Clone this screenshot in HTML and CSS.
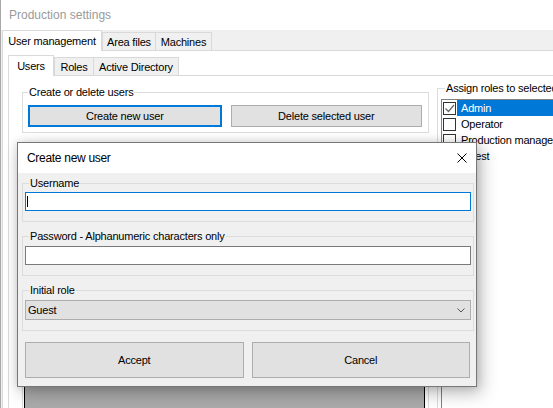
FILE: index.html
```html
<!DOCTYPE html>
<html lang="en">
<head>
<meta charset="utf-8">
<title>Production settings</title>
<link rel="stylesheet" href="styles.css">
</head>
<body>
<div class="app">
  <div class="titlebar">Production settings</div>
  <div class="form">
    <div class="tabstrip outer-tabs">
      <div class="tab sel w-um">User management</div>
      <div class="tab w-af">Area files</div>
      <div class="tab w-ma overlap">Machines</div>
    </div>
    <div class="page outer-page">
      <div class="tabstrip inner-tabs">
        <div class="tab sel w-us">Users</div>
        <div class="tab w-ro">Roles</div>
        <div class="tab w-ad overlap">Active Directory</div>
      </div>
      <div class="page inner-page">
        <div class="leftcol">
          <fieldset class="group create-group">
            <legend>Create or delete users</legend>
            <div class="btnrow">
              <div class="btn focused">Create new user</div>
              <div class="btn">Delete selected user</div>
            </div>
          </fieldset>
          <div class="group users-group">
            <div class="grid"></div>
          </div>
        </div>
        <div class="rightcol">
          <fieldset class="group roles-group">
            <legend>Assign roles to selected user</legend>
            <div class="listbox">
              <div class="item">
                <span class="check">
                  <svg width="11" height="11" viewBox="0 0 11 11"><polyline points="1.5,5.5 4.5,8.5 10,2" fill="none" stroke="#666" stroke-width="1.2"/></svg>
                </span>
                <span class="lbl selected">Admin</span>
              </div>
              <div class="item"><span class="check"></span><span class="lbl">Operator</span></div>
              <div class="item"><span class="check"></span><span class="lbl">Production manager</span></div>
              <div class="item"><span class="check"></span><span class="lbl">Guest</span></div>
            </div>
          </fieldset>
        </div>
      </div>
    </div>
  </div>

  <div class="dialog">
    <div class="dlg-title">
      <span>Create new user</span>
      <svg class="close" width="10" height="10" viewBox="0 0 10 10"><path d="M0.5 0.5 L9.5 9.5 M9.5 0.5 L0.5 9.5" stroke="#000" stroke-width="1" fill="none"/></svg>
    </div>
    <div class="dlg-body">
      <fieldset class="group dgroup first">
        <legend>Username</legend>
        <div class="textbox active"><span class="caret"></span></div>
      </fieldset>
      <fieldset class="group dgroup">
        <legend>Password - Alphanumeric characters only</legend>
        <div class="textbox"></div>
      </fieldset>
      <fieldset class="group dgroup">
        <legend>Initial role</legend>
        <div class="combo">
          <span>Guest</span>
          <svg width="8" height="5" viewBox="0 0 8 5"><polyline points="0.5,0.5 4,4 7.5,0.5" fill="none" stroke="#555" stroke-width="1"/></svg>
        </div>
      </fieldset>
      <div class="dlg-buttons">
        <div class="btn big">Accept</div>
        <div class="btn big">Cancel</div>
      </div>
    </div>
  </div>
</div>
</body>
</html>
```

FILE: styles.css
```css
* { box-sizing: border-box; }

html, body {
  margin: 0;
  padding: 0;
  overflow: hidden;
}

body {
  width: 553px;
  height: 408px;
  background: #fff;
  font-family: "Liberation Sans", Arial, sans-serif;
  font-size: 11px;
  letter-spacing: -0.2px;
  color: #000;
}

.app {
  position: relative;
  width: 640px;
  height: 408px;
  overflow: hidden;
  border-left: 1px solid #a8a8a8;
  background: #fff;
}

.titlebar {
  height: 30px;
  line-height: 30px;
  padding-left: 8px;
  font-size: 12px;
  letter-spacing: 0;
  color: #9a9a9a;
  background: #fff;
}

.form {
  background: #f0f0f0;
  padding-left: 1px;
  height: 378px;
}

/* tabs */
.tabstrip {
  display: flex;
  align-items: flex-end;
  height: 20px;
}

.tab {
  height: 18px;
  border: 1px solid #d9d9d9;
  border-bottom: none;
  background: #f0f0f0;
  display: flex;
  align-items: center;
  justify-content: center;
  white-space: nowrap;
  padding-top: 1px;
}

.tab.sel {
  height: 21px;
  margin-bottom: -1px;
  background: #fff;
  position: relative;
  z-index: 1;
  padding-top: 0;
  padding-bottom: 1px;
}

.tab.overlap { margin-left: -1px; }

.w-um { width: 100px; }
.w-af { width: 54px; }
.w-ma { width: 57px; }
.w-us { width: 46px; }
.w-ro { width: 40px; }
.w-ad { width: 86px; }

.page {
  border: 1px solid #d9d9d9;
  background: #fff;
}

.outer-page {
  height: 400px;
  padding: 4px 0 0 5px;
}

.inner-page {
  height: 380px;
  display: flex;
  align-items: flex-start;
  padding-left: 13px;
}

/* group boxes */
.group {
  margin: 0;
  border: 1px solid #dcdcdc;
  min-width: 0;
}

.group > legend {
  padding: 0 1px;
  line-height: 14px;
  white-space: nowrap;
}

.leftcol {
  width: 407px;
  margin-top: 9px;
}

.create-group {
  padding: 6px 6px 5px 5px;
}

.btnrow {
  display: flex;
  gap: 9px;
}

.btn {
  background: #e1e1e1;
  border: 1px solid #adadad;
  display: flex;
  align-items: center;
  justify-content: center;
  white-space: nowrap;
}

.btnrow .btn {
  flex: 1;
  height: 22px;
}

.btn.focused {
  border: 2px solid #0078d7;
}

.users-group {
  margin-top: 14px;
  padding: 14px 3px 0 1px;
}

.grid {
  height: 260px;
  width: 401px;
  background: #ababab;
  border: 1px solid #000;
}

.rightcol {
  width: 200px;
  margin-left: 8px;
  margin-top: 5px;
}

.roles-group {
  padding: 4px 0 0 3px;
}

.roles-group > legend {
  margin-left: 4px;
}

.listbox {
  height: 320px;
  border: 1px solid #828282;
  border-right: none;
  background: #fff;
}

.item {
  display: flex;
  align-items: center;
  height: 16px;
}

.check {
  width: 13px;
  height: 13px;
  margin-left: 1px;
  border: 1px solid #333;
  background: #fff;
  display: flex;
  align-items: center;
  justify-content: center;
}

.lbl {
  flex: 1;
  height: 16px;
  line-height: 16px;
  margin-left: 1px;
  padding-left: 4px;
  white-space: nowrap;
}

.lbl.selected {
  background: #0078d7;
  color: #fff;
}

/* dialog */
.dialog {
  position: absolute;
  left: 16px;
  top: 142px;
  width: 460px;
  height: 245px;
  border: 1px solid #777;
  background: #f0f0f0;
  box-shadow: 0 0 8px rgba(0, 0, 0, 0.12), 4px 6px 16px rgba(0, 0, 0, 0.28);
  z-index: 5;
}

.dlg-title {
  height: 30px;
  background: #fff;
  display: flex;
  align-items: center;
  justify-content: space-between;
  padding: 0 9px 0 9px;
  font-size: 12px;
  letter-spacing: -0.3px;
}

.close { display: block; }

.dlg-body {
  height: 213px;
  padding: 1px 2px 8px 4px;
}

.dgroup {
  margin-top: 7px;
  padding: 3px 2px 10px 2px;
}

.dgroup.first {
  margin-top: 2px;
  padding-top: 2px;
}

.dgroup > legend {
  margin-left: 4px;
}

.textbox {
  height: 19px;
  background: #fff;
  border: 1px solid #7a7a7a;
  display: flex;
  align-items: center;
}

.textbox.active {
  border-color: #0078d7;
}

.caret {
  width: 1px;
  height: 11px;
  margin-left: 1px;
  background: #000;
}

.combo {
  height: 20px;
  background: #e1e1e1;
  border: 1px solid #adadad;
  display: flex;
  align-items: center;
  justify-content: space-between;
  padding: 0 5px 0 2px;
}

.combo svg { display: block; }

.dlg-buttons {
  display: flex;
  gap: 8px;
  margin-top: 11px;
  padding: 0 4px 0 3px;
}

.btn.big {
  flex: 1;
  height: 36px;
}
```
